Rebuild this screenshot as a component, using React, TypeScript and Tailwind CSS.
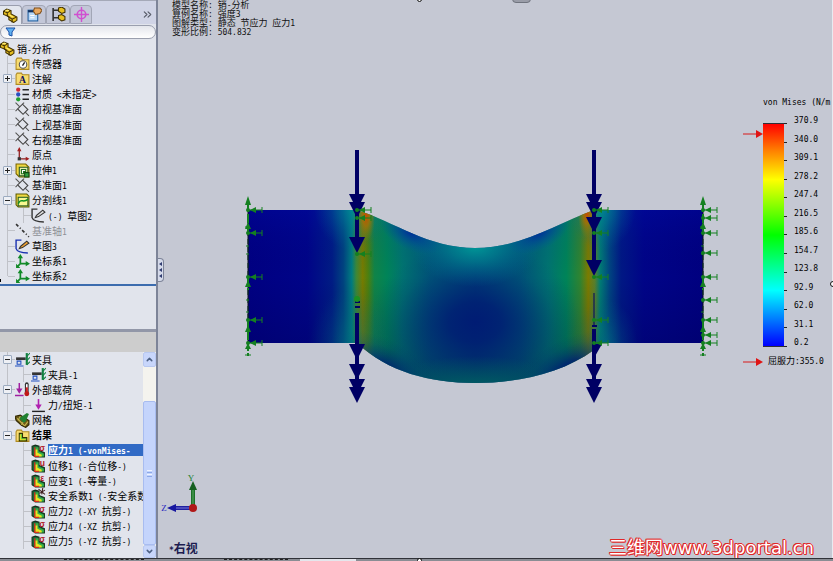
import { Fragment, useState, type ReactNode } from "react";
import { ChevronDown, ChevronUp, ChevronsRight } from "lucide-react";

type Level = 0 | 1 | 2;

interface TreeItem {
  icon: ReactNode;
  label: string;
  level: Level;
  toggle?: "+" | "-";
  muted?: boolean;
  bold?: boolean;
  last?: boolean;
}

// CJK glyphs are drawn full width, everything else in a half width mono face
function Mixed({ text }: { text: string }) {
  const runs = text.split(/([ -~]+)/).filter(Boolean);
  return (
    <>
      {runs.map((run, i) =>
        /^[ -~]+$/.test(run) ? (
          <span key={i} className="whitespace-pre font-['DejaVu_Sans_Mono',monospace] text-[8px]">
            {run}
          </span>
        ) : (
          <Fragment key={i}>{run}</Fragment>
        )
      )}
    </>
  );
}

function Icon({ children }: { children: ReactNode }) {
  return (
    <svg width="15" height="15" viewBox="0 0 14 14" className="shrink-0" fill="none" aria-hidden="true">
      {children}
    </svg>
  );
}

const PartIcon = () => (
  <Icon>
    <path d="M0.500 3l3-2 4 1.500v3l5.500 3v3l-3 2-4.500-2.500V8L.5 6z" fill="#e8c020" stroke="#403000" />
    <path d="M1 3l3 1.500 3-2M4 4.500v3l4.500 3 4-2M8.500 10.500v3" stroke="#403000" />
    <path d="M2 3l2-1 1.500 .5M6 6.500l3.500 2" stroke="#fff07a" />
  </Icon>
);

const FolderBase = () => (
  <path d="M1 3.500l1-1.500h4l1 1.500h6v9H1z" fill="#f8dc70" stroke="#b08a20" />
);

const SensorIcon = () => (
  <Icon>
    <FolderBase />
    <circle cx="7.500" cy="8" r="3.500" fill="#fff" stroke="#555" />
    <path d="M7 9l2-3" stroke="#222" strokeWidth="1.300" />
  </Icon>
);

const NoteIcon = () => (
  <Icon>
    <FolderBase />
    <text x="7" y="11.500" textAnchor="middle" fontSize="9" fontWeight="700" fontFamily="Liberation Serif, serif" fill="#101060">
      A
    </text>
  </Icon>
);

const MaterialIcon = () => (
  <Icon>
    <circle cx="3" cy="2.500" r="2" fill="#d02a30" />
    <circle cx="3" cy="7" r="2" fill="#2a50c0" />
    <circle cx="3" cy="11.500" r="2" fill="#20a030" />
    <path d="M7 2.500h6M7 7h6M7 11.500h6" stroke="#222" strokeWidth="1.400" />
  </Icon>
);

const PlaneIcon = () => (
  <Icon>
    <path d="M2.500 6.500L7 2l5 5-4.500 4.500z" stroke="#444" />
    <path d="M.5 .5l4 4M9.500 9.500l3.500 3.500M.5 8.500l2-2M7 2l1.500-1.500" stroke="#555" />
  </Icon>
);

const OriginIcon = () => (
  <Icon>
    <path d="M4 11V3M4 11h8" stroke="#902020" strokeWidth="1.200" />
    <path d="M2 4l2-4 2 4zM10 9l3.500 2-3.500 2z" fill="#a02020" />
    <rect x="2.500" y="9.500" width="3" height="3" fill="#333" />
  </Icon>
);

const ExtrudeIcon = () => (
  <Icon>
    <path d="M1 1h9l3 3v9H4L1 10z" fill="#f0d840" stroke="#7a6400" />
    <path d="M4 4h8v8H4z" fill="#e8f0b0" stroke="#285a28" />
    <path d="M6 6h4v2H8v2H6z" fill="#fff" stroke="#207020" />
    <path d="M9 9h4v4H9z" fill="#30a040" stroke="#104810" />
  </Icon>
);

const SplitIcon = () => (
  <Icon>
    <path d="M1 1h10l2 2v10H3L1 11z" fill="#f0d840" stroke="#5c5a00" />
    <rect x="3" y="4" width="9" height="8" fill="#f8f890" stroke="#286028" />
    <path d="M3 10c3-6 4 0 9-4" stroke="#109020" strokeWidth="1.500" />
  </Icon>
);

const SketchIcon = ({ color, pen }: { color: string; pen: string }) => (
  <Icon>
    <path d="M6 1H1v8c1 3 4 4 11 4" stroke={color} strokeWidth="1.300" />
    <path d="M5 7l6-5 2 2-6 4-3 1z" fill={pen} stroke="#333" />
  </Icon>
);

const AxisIcon = () => (
  <Icon>
    <path d="M1 1l12 12" stroke="#333" strokeWidth="1.500" strokeDasharray="3 2 1 2" />
  </Icon>
);

const CoordIcon = () => (
  <Icon>
    <path d="M5 9V3M5 9h7M5 9l-3 3" stroke="#128a28" strokeWidth="1.600" />
    <path d="M2.500 4L5 0l2.500 4zM10 6.500l4 2.500-4 2.500zM1 9v4h4z" fill="#128a28" />
  </Icon>
);

const FixtureIcon = () => (
  <Icon>
    <path d="M1 5h9v2.500H1z" fill="#333" />
    <path d="M11 1v11" stroke="#118040" strokeWidth="2" />
    <path d="M11 4l3-3M11 8l3-3M11 12l3-3" stroke="#118040" />
    <path d="M2 8.500h3.500v3H2zM0 13h8" stroke="#2050c0" />
  </Icon>
);

const LoadsIcon = () => (
  <Icon>
    <path d="M4 1v8M0 12.500h8" stroke="#a020a0" strokeWidth="1.400" />
    <path d="M1 6h6l-3 5z" fill="#a020a0" />
    <path d="M11 2v9" stroke="#333" strokeWidth="3.500" strokeLinecap="round" />
    <path d="M11 2v8" stroke="#fff" strokeWidth="1.500" />
    <path d="M11 5v6" stroke="#d02020" strokeWidth="2" />
    <circle cx="11" cy="11" r="2.300" fill="#c01818" />
  </Icon>
);

const ForceIcon = () => (
  <Icon>
    <path d="M7 1v7" stroke="#b020b0" strokeWidth="1.500" />
    <path d="M4 6h6l-3 5z" fill="#b020b0" />
    <path d="M1 12.500h12" stroke="#222" strokeWidth="1.300" />
  </Icon>
);

const MeshIcon = () => (
  <Icon>
    <path d="M0 3l5-1 3 2 5 3v4l-3 2.500-4-2L1 7z" fill="#6a5818" stroke="#302800" />
    <path d="M2 5l3 3 4 4M5 3L3 7M8 8l-2 3M12 8l-3 4" stroke="#c8b850" />
    <path d="M4 5l7-5 2 1-3 7-2 1z" fill="#208030" />
  </Icon>
);

const ResultsIcon = () => (
  <Icon>
    <FolderBase />
    <path d="M4 5h3v4h4v3H4z" fill="#70d040" stroke="#303000" />
    <path d="M5 6v5h5" stroke="#e8e020" />
  </Icon>
);

const PlotIcon = ({ mark }: { mark?: string }) => (
  <Icon>
    <path d="M1 3l3-1 3.500 1v4l5 2v4H4L1 11z" fill="#186838" stroke="#16301c" />
    <path d="M4 4h3v4l5 2v2.500H4z" fill="#38b048" />
    <path d="M4 6h2v3l4 2v1.500H4z" fill="#ece420" />
    <path d="M3.500 4v8.500h4" stroke="#d83020" strokeWidth="1.200" />
    {mark ? (
      <text x="10.500" y="7" textAnchor="middle" fontSize="8" fontWeight="700" fontFamily="Liberation Sans, sans-serif" fill="#b01828">
        {mark}
      </text>
    ) : (
      <path d="M7 1l6 5M11 0l-1 6M8 5l5-3" stroke="#402020" />
    )}
  </Icon>
);

const MODEL_TREE: TreeItem[] = [
  { icon: <PartIcon />, label: "销-分析", level: 0 },
  { icon: <SensorIcon />, label: "传感器", level: 1 },
  { icon: <NoteIcon />, label: "注解", level: 1, toggle: "+" },
  { icon: <MaterialIcon />, label: "材质 <未指定>", level: 1 },
  { icon: <PlaneIcon />, label: "前视基准面", level: 1 },
  { icon: <PlaneIcon />, label: "上视基准面", level: 1 },
  { icon: <PlaneIcon />, label: "右视基准面", level: 1 },
  { icon: <OriginIcon />, label: "原点", level: 1 },
  { icon: <ExtrudeIcon />, label: "拉伸1", level: 1, toggle: "+" },
  { icon: <PlaneIcon />, label: "基准面1", level: 1 },
  { icon: <SplitIcon />, label: "分割线1", level: 1, toggle: "-" },
  { icon: <SketchIcon color="#333" pen="#ddd" />, label: "(-) 草图2", level: 2 },
  { icon: <AxisIcon />, label: "基准轴1", level: 1, muted: true },
  { icon: <SketchIcon color="#1830b0" pen="#f0a030" />, label: "草图3", level: 1 },
  { icon: <CoordIcon />, label: "坐标系1", level: 1 },
  { icon: <CoordIcon />, label: "坐标系2", level: 1, last: true },
];

const STUDY_TREE: TreeItem[] = [
  { icon: <FixtureIcon />, label: "夹具", level: 1, toggle: "-" },
  { icon: <FixtureIcon />, label: "夹具-1", level: 2 },
  { icon: <LoadsIcon />, label: "外部载荷", level: 1, toggle: "-" },
  { icon: <ForceIcon />, label: "力/扭矩-1", level: 2 },
  { icon: <MeshIcon />, label: "网格", level: 1 },
  { icon: <ResultsIcon />, label: "结果", level: 1, toggle: "-", bold: true, last: true },
  { icon: <PlotIcon mark="σ" />, label: "应力1 (-vonMises-", level: 2 },
  { icon: <PlotIcon mark="u" />, label: "位移1 (-合位移-)", level: 2 },
  { icon: <PlotIcon mark="ε" />, label: "应变1 (-等量-)", level: 2 },
  { icon: <PlotIcon />, label: "安全系数1 (-安全系数", level: 2 },
  { icon: <PlotIcon mark="σ" />, label: "应力2 (-XY 抗剪-)", level: 2 },
  { icon: <PlotIcon mark="σ" />, label: "应力4 (-XZ 抗剪-)", level: 2 },
  { icon: <PlotIcon mark="σ" />, label: "应力5 (-YZ 抗剪-)", level: 2 },
];

function Gutter({ item, trunk }: { item: TreeItem; trunk: boolean }) {
  return (
    <span className="grid w-[15px] shrink-0 self-stretch place-items-center *:[grid-area:1/1]">
      {trunk && <span className={item.last ? "h-1/2 w-px self-start bg-[#c0c2c8]" : "h-full w-px bg-[#c0c2c8]"} />}
      {item.level === 1 && <span className="h-px w-[7px] justify-self-end bg-[#c0c2c8]" />}
      {item.toggle && (
        <button
          type="button"
          aria-label={item.toggle === "+" ? `展开${item.label}` : `折叠${item.label}`}
          className="z-10 mr-px size-[9px] rounded-[1px] border border-[#9cabc0] bg-[#eef0f5]"
        >
          <svg viewBox="0 0 7 7" className="block size-[7px]" stroke="#222">
            <path d={item.toggle === "+" ? "M1 3.500h5M3.500 1v5" : "M1 3.500h5"} />
          </svg>
        </button>
      )}
    </span>
  );
}

function Row({ item, trunk, selected, onSelect }: { item: TreeItem; trunk: boolean; selected: boolean; onSelect: () => void }) {
  return (
    <li className="flex min-w-0 items-center">
      {item.level > 0 && <Gutter item={item} trunk={trunk} />}
      {item.level === 2 && (
        <span className="grid w-4 shrink-0 self-stretch *:[grid-area:1/1]">
          <span className="h-full w-px justify-self-center bg-[#c0c2c8]" />
          <span className="h-px w-2 self-center justify-self-end bg-[#c0c2c8]" />
        </span>
      )}
      {item.icon}
      <button
        type="button"
        onClick={onSelect}
        className={
          "ml-[2px] h-3 whitespace-nowrap text-left text-[10px] leading-[14px] " +
          (selected
            ? "flex-1 bg-[#316ac5] font-bold text-white"
            : item.muted
              ? "text-[#8e9096]"
              : item.bold
                ? "font-bold text-black"
                : "text-black")
        }
      >
        <Mixed text={item.label} />
      </button>
    </li>
  );
}

function PanelTabs() {
  return (
    <div className="flex h-6 items-end border-t border-[#a5a9b8] bg-[#d0d4e6]">
      <button type="button" aria-label="特征树" className="flex h-[19px] w-[22px] items-center justify-center rounded-tr-sm border-t border-r border-[#9a9eae] bg-[#e3e6ee]">
        <PartIcon />
      </button>
      <button type="button" aria-label="属性" className="flex h-[19px] w-6 items-center justify-center rounded-t-sm border border-[#a2a6b6] bg-[#c3c7d8]">
        <Icon>
          <rect x="1" y="3" width="9" height="10" fill="#b8d8f8" stroke="#2060a0" />
          <path d="M1 4h9" stroke="#103060" strokeWidth="2" />
          <path d="M3 8h4M3 10h4" stroke="#fff" />
          <path d="M7 1h5l2 2-2 3-4 1-2-3z" fill="#e8a860" stroke="#80501c" />
        </Icon>
      </button>
      <button type="button" aria-label="配置" className="flex h-[19px] w-6 items-center justify-center rounded-t-sm border border-[#a2a6b6] bg-[#c3c7d8]">
        <Icon>
          <path d="M2 1v12M2 3h5M2 10h5" stroke="#333" strokeWidth="1.500" />
          <path d="M7 1l3-1 3 2v3l-3 1-3-2zM7 8l3-1 3 2v3l-3 1-3-2z" fill="#e8c020" stroke="#403000" />
        </Icon>
      </button>
      <button type="button" aria-label="尺寸" className="flex h-[19px] w-[22px] items-center justify-center rounded-t-sm border border-[#a2a6b6] bg-[#c3c7d8]">
        <Icon>
          <circle cx="7" cy="7" r="4" stroke="#d050d0" strokeWidth="1.500" />
          <path d="M7 0v14M0 7h14" stroke="#d050d0" strokeWidth="1.300" />
        </Icon>
      </button>
      <button type="button" aria-label="更多" className="mr-[2px] ml-auto flex h-5 items-center text-[#555a66]">
        <ChevronsRight size={13} />
      </button>
    </div>
  );
}

function Sidebar() {
  const [selected, setSelected] = useState("应力1 (-vonMises-");

  return (
    <aside className="flex w-[158px] shrink-0 border-r-2 border-[#7d8498] bg-[#e1e4ec]">
      <div className="flex min-w-0 flex-1 flex-col">
        <PanelTabs />
        <label className="mt-px flex h-[14px] items-center rounded-full border border-[#9a9fae] bg-linear-to-b from-[#e4e6ec] to-white pl-1">
          <svg width="11" height="10" viewBox="0 0 11 10" aria-hidden="true">
            <path d="M1 1h9L7 5v4L4 8V5z" fill="#60b0f0" stroke="#1850a8" />
          </svg>
          <input aria-label="过滤器" className="ml-1 h-3 min-w-0 flex-1 bg-transparent text-[10px] outline-none" />
        </label>
        <ul className="mt-[2px] grid h-[243px] auto-rows-fr">
          {MODEL_TREE.map((item) => (
            <Row
              key={item.label}
              item={item}
              trunk
              selected={selected === item.label}
              onSelect={() => setSelected(item.label)}
            />
          ))}
        </ul>
        <div className="h-[2px] bg-[#3c6cae]" />
        <div className="flex-1" />
        <div className="h-[3px] bg-[#9297a8]" />
        <div className="h-5 bg-[#cdcdcd]" />
        <div className="flex h-[206px]">
          <ul className="grid h-[197px] min-w-0 flex-1 auto-rows-fr overflow-hidden">
            {STUDY_TREE.map((item, i) => (
              <Row
                key={item.label}
                item={item}
                trunk={i < 6}
                selected={selected === item.label}
                onSelect={() => setSelected(item.label)}
              />
            ))}
          </ul>
          <div className="flex w-[13px] flex-col bg-[#f4f3ee]">
            <button type="button" aria-label="向上滚动" className="flex h-[15px] items-center justify-center rounded-xs border border-[#b8c8f0] bg-[#c8d6fb] text-[#4d6185]">
              <ChevronUp size={9} strokeWidth={4} />
            </button>
            <div className="mt-[34px] flex flex-1 flex-col items-center justify-center gap-px rounded-xs border border-[#a8bcf0] bg-[#c4d4fc]">
              <i className="h-px w-[5px] bg-[#eef3ff]" />
              <i className="h-px w-[5px] bg-[#8ca8e8]" />
              <i className="h-px w-[5px] bg-[#eef3ff]" />
              <i className="h-px w-[5px] bg-[#8ca8e8]" />
            </div>
            <button type="button" aria-label="向下滚动" className="flex h-[13px] items-center justify-center rounded-xs border border-[#b8c8f0] bg-[#c8d6fb] text-[#4d6185]">
              <ChevronDown size={9} strokeWidth={4} />
            </button>
          </div>
        </div>
      </div>
    </aside>
  );
}

// short arrow pointing left with a bar at its tail
const Pin = ({ x, y }: { x: number; y: number }) => (
  <g stroke="#148020" fill="#148020">
    <path d={`M${x} ${y}h14m0-3v6`} fill="none" />
    <path d={`M${x + 2} ${y}l6-3v6z`} stroke="none" />
    <circle cx={x} cy={y} r="2" stroke="none" />
  </g>
);

const Edge = ({ x }: { x: number }) => (
  <g fill="#148020">
    <path d={`M${x - 3} 205l3-9 3 9z`} />
    <path d={`M${x} 203v28M${x} 277v13M${x} 320v36`} stroke="#148020" strokeWidth="2" strokeDasharray="9 2" />
    <path d={`M${x} 231v46M${x} 290v30`} stroke="#0a3020" strokeDasharray="5 3" />
    <path d={`M${x - 3} 229l3-7 3 7zM${x - 3} 287l3-7 3 7zM${x - 3} 332l3-7 3 7zM${x - 3} 349l3-6 3 6z`} />
    <path d={`M${x - 3} 355h6M${x - 3} 227h4M${x - 2} 246h3M${x - 2} 254h3M${x - 2} 300h3M${x - 2} 312h3`} stroke="#148020" />
  </g>
);

const Heads = ({ x, tops }: { x: number; tops: number[] }) => (
  <>
    {tops.map((y) => (
      <path key={y} d={`M${x - 8} ${y}h16l-8 16z`} fill="#000064" />
    ))}
  </>
);

function StressModel() {
  return (
    <svg
      viewBox="158 38 584 432"
      preserveAspectRatio="xMinYMin meet"
      className="h-[432px] min-w-0 flex-1"
      role="img"
      aria-label="von Mises 应力云图"
    >
      <defs>
        <clipPath id="body">
          <path d="M248 210H357C395 222 428 248 475 248S555 224 594 210H703V343H601L594 350C562 373 520 383 475 383S388 372 357 343H248z" />
        </clipPath>
        <linearGradient id="across" gradientUnits="userSpaceOnUse" x1="248" y1="0" x2="703" y2="0">
          <stop offset="0" stopColor="#000082" />
          <stop offset=".130" stopColor="#000488" />
          <stop offset=".185" stopColor="#001c84" />
          <stop offset=".210" stopColor="#004480" />
          <stop offset=".228" stopColor="#007c80" />
          <stop offset=".238" stopColor="#3c8838" />
          <stop offset=".252" stopColor="#767c00" />
          <stop offset=".264" stopColor="#4c8010" />
          <stop offset=".278" stopColor="#108448" />
          <stop offset=".305" stopColor="#008458" />
          <stop offset=".340" stopColor="#007470" />
          <stop offset=".400" stopColor="#005878" />
          <stop offset=".500" stopColor="#004078" />
          <stop offset=".600" stopColor="#005878" />
          <stop offset=".660" stopColor="#007470" />
          <stop offset=".700" stopColor="#008458" />
          <stop offset=".730" stopColor="#308430" />
          <stop offset=".748" stopColor="#7c7c00" />
          <stop offset=".762" stopColor="#58802c" />
          <stop offset=".774" stopColor="#007c74" />
          <stop offset=".795" stopColor="#004480" />
          <stop offset=".820" stopColor="#001884" />
          <stop offset=".870" stopColor="#000488" />
          <stop offset="1" stopColor="#000080" />
        </linearGradient>
        <linearGradient id="shade" x1="0" y1="0" x2="0" y2="1">
          <stop offset="0" stopColor="#0020ff" stopOpacity=".12" />
          <stop offset=".4" stopColor="#000040" stopOpacity="0" />
          <stop offset="1" stopColor="#000030" stopOpacity=".3" />
        </linearGradient>
        <radialGradient id="teal">
          <stop offset="0" stopColor="#009c98" />
          <stop offset=".4" stopColor="#009094" stopOpacity=".6" />
          <stop offset="1" stopColor="#006c90" stopOpacity="0" />
        </radialGradient>
        <radialGradient id="navy">
          <stop offset="0" stopColor="#001c74" />
          <stop offset=".25" stopColor="#001c74" stopOpacity=".8" />
          <stop offset=".5" stopColor="#002474" stopOpacity=".45" />
          <stop offset=".75" stopColor="#003074" stopOpacity=".15" />
          <stop offset="1" stopColor="#003474" stopOpacity="0" />
        </radialGradient>
        <radialGradient id="blue">
          <stop offset="0" stopColor="#003098" />
          <stop offset="1" stopColor="#005898" stopOpacity="0" />
        </radialGradient>
        <radialGradient id="deepgreen">
          <stop offset="0" stopColor="#006464" />
          <stop offset="1" stopColor="#006060" stopOpacity="0" />
        </radialGradient>
        <radialGradient id="hot">
          <stop offset="0" stopColor="#c84c00" />
          <stop offset=".4" stopColor="#a87000" stopOpacity=".8" />
          <stop offset="1" stopColor="#808000" stopOpacity="0" />
        </radialGradient>
      </defs>

      <g clipPath="url(#body)">
        <rect x="248" y="205" width="455" height="180" fill="url(#across)" />
        <rect x="248" y="205" width="455" height="180" fill="url(#shade)" />
        <ellipse cx="475" cy="322" rx="105" ry="80" fill="url(#navy)" />
        <ellipse cx="475" cy="390" rx="100" ry="34" fill="url(#deepgreen)" />
        <ellipse cx="475" cy="245" rx="65" ry="42" fill="url(#teal)" />
        <ellipse cx="411" cy="233" rx="34" ry="17" fill="url(#blue)" transform="rotate(26 411 233)" />
        <ellipse cx="539" cy="233" rx="34" ry="17" fill="url(#blue)" transform="rotate(-26 539 233)" />
        <ellipse cx="380" cy="370" rx="60" ry="32" fill="url(#navy)" transform="rotate(26 380 370)" />
        <ellipse cx="571" cy="370" rx="60" ry="32" fill="url(#navy)" transform="rotate(-26 571 370)" />
        <ellipse cx="352" cy="206" rx="38" ry="44" fill="url(#teal)" opacity=".6" />
        <ellipse cx="602" cy="206" rx="34" ry="44" fill="url(#teal)" opacity=".6" />
        <ellipse cx="350" cy="345" rx="40" ry="56" fill="url(#teal)" opacity=".35" />
        <ellipse cx="606" cy="345" rx="32" ry="46" fill="url(#teal)" opacity=".35" />
        <ellipse cx="366" cy="216" rx="9" ry="26" fill="url(#hot)" />
        <ellipse cx="587" cy="214" rx="9" ry="24" fill="url(#hot)" />
      </g>
      <path d="M248 210v133M703 210v133" stroke="#101020" />

      <g stroke="#000064" strokeWidth="4">
        <path d="M357 150v94M357 313v76" />
        <path d="M594 150v112M594 329v60" />
        <path d="M594 293v32" strokeWidth="1" />
        <path d="M355 302h5M355 307h5M592 326h5" strokeWidth="2" />
      </g>
      <Heads x={357} tops={[194, 202, 237, 344, 364, 379, 387]} />
      <Heads x={594} tops={[194, 202, 217, 260, 364, 379, 387]} />
      <path d="M594 344h8l-8 14z" fill="#000064" />

      <Edge x={248} />
      <Edge x={703} />
      {[210, 233, 277, 320, 343].map((y) => (
        <Pin key={y} x={248} y={y} />
      ))}
      {[210, 218, 233, 253, 277, 300, 320, 335, 343].map((y) => (
        <Pin key={y} x={703} y={y} />
      ))}
      {[210, 218, 254].map((y) => (
        <Pin key={y} x={357} y={y} />
      ))}
      {[210, 233, 277, 320, 343].map((y) => (
        <Pin key={y} x={594} y={y} />
      ))}
      <circle cx="357" cy="299" r="3" fill="#1c9020" />
    </svg>
  );
}

const LEGEND = ["370.9", "340.0", "309.1", "278.2", "247.4", "216.5", "185.6", "154.7", "123.8", "92.9", "62.0", "31.1", "0.2"];

const RedArrow = () => (
  <svg width="21" height="10" viewBox="0 0 21 10" className="shrink-0" aria-hidden="true">
    <path d="M1 5h14" stroke="#d81818" />
    <path d="M14 1l7 4-7 4z" fill="#e01414" />
  </svg>
);

function Legend() {
  return (
    <section aria-label="图例" className="w-[90px] shrink-0 pt-[60px] font-['DejaVu_Sans_Mono',monospace] text-[8px] leading-[10px] text-black">
      <h2 className="ml-[21px] whitespace-nowrap">von Mises (N/m</h2>
      <div className="mt-2 flex">
        <div className="mt-[13px]">
          <RedArrow />
        </div>
        <div className="mt-[7px] h-[224px] w-[21px] border-y border-[#303038] bg-[linear-gradient(to_bottom,#ff0000,#ff8000_12%,#ffff00_25%,#00ff00_50%,#00ffff_75%,#0000ff)]" />
        <div className="mt-[7px] flex h-[224px] w-[3px] flex-col justify-between">
          {LEGEND.map((value) => (
            <i key={value} className="h-px bg-[#222]" />
          ))}
        </div>
        <ol className="ml-[7px] flex h-[232px] flex-col justify-between">
          {LEGEND.map((value) => (
            <li key={value}>{value}</li>
          ))}
        </ol>
      </div>
      <p className="mt-2 flex items-center gap-[5px] whitespace-nowrap">
        <RedArrow />
        <span className="font-['Liberation_Sans','Noto_Sans_CJK_SC',sans-serif] text-[9px]">
          <Mixed text="屈服力:355.0" />
        </span>
      </p>
    </section>
  );
}

function Viewport() {
  return (
    <main className="relative flex min-w-0 flex-1 flex-col overflow-hidden bg-[#c5c8d3]">
      <ul className="grid h-[38px] content-start pt-px pl-[14px] text-[9px] leading-[9px] text-[#111]">
        {["模型名称: 销-分析", "算例名称: 强度3", "图解类型: 静态 节应力 应力1", "变形比例: 504.832"].map((line) => (
          <li key={line}>
            <Mixed text={line} />
          </li>
        ))}
      </ul>
      <div className="flex">
        <StressModel />
        <Legend />
      </div>
      <footer className="mt-auto flex items-end justify-between pr-[18px]">
        <div>
          <svg width="48" height="46" viewBox="160 472 48 46" className="ml-[2px]" role="img" aria-label="坐标轴">
            <path d="M193 509v-20" stroke="#1c7028" strokeWidth="4" />
            <path d="M193 509v-20" stroke="#58a860" />
            <path d="M189 492l4-9 4 9z" fill="#156020" />
            <path d="M193 510h-18" stroke="#2020a0" strokeWidth="4" />
            <path d="M193 510h-18" stroke="#7878d8" />
            <path d="M176 506l-9 4 9 4z" fill="#1818a0" />
            <circle cx="193" cy="510" r="4" fill="#b01818" />
            <text x="191" y="483" textAnchor="middle" fontSize="9" fontFamily="Liberation Serif, serif" fill="#208030">
              Y
            </text>
            <text x="164" y="513" textAnchor="middle" fontSize="9" fontFamily="Liberation Serif, serif" fill="#2828c0">
              Z
            </text>
          </svg>
          <p className="mt-[26px] ml-[11px] text-[12px] leading-[14px] font-bold text-[#1c1c50]">
            <Mixed text="*右视" />
          </p>
        </div>
        <a
          href="#portal"
          className="flex items-center font-['DejaVu_Sans','Noto_Sans_CJK_SC',sans-serif] text-[18px] leading-5 whitespace-nowrap text-white [text-shadow:1px_0_#e02828,-1px_0_#e02828,0_1px_#e02828,0_-1px_#e02828,1px_1px_#e02828,-1px_-1px_#e02828]"
        >
          三维网www.3dportal.cn
        </a>
      </footer>
      <span className="absolute -top-[5px] left-[354px] h-2 w-[19px] rounded-md border border-[#70747e] bg-[#9a9da8]" />
      <button
        type="button"
        aria-label="收起面板"
        className="absolute top-[258px] left-0 flex h-6 w-[6px] items-center justify-center rounded-r-sm border border-l-0 border-[#7d8498] bg-[#d5daea]"
      >
        <svg width="4" height="18" viewBox="0 0 4 18" fill="#303c70">
          <path d="M3 1v4L0 3zM3 7v4L0 9zM3 13v4l-3-2z" />
        </svg>
      </button>
    </main>
  );
}

export default function App() {
  return (
    <div className="relative flex min-h-screen flex-col overflow-hidden font-['Liberation_Sans','Noto_Sans_CJK_SC',sans-serif]">
      <div className="flex flex-1 border-r border-[#e8eaf0]">
        <Sidebar />
        <Viewport />
      </div>
      <div className="flex h-[3px] border-t border-[#303238] bg-[#8a8d94]">
        <i className="ml-16 w-20 border-t border-dashed border-[#222]" />
        <i className="ml-20 w-16 border-t border-dashed border-[#222]" />
        <i className="ml-3 w-14 bg-[#e4e6ec]" />
      </div>
      <span className="absolute -top-[3px] left-1/2 size-[5px] rounded-full border border-[#111] bg-white" />
      <span className="absolute top-1/2 -right-[3px] size-[6px] rounded-full border border-[#111] bg-white" />
      <span className="absolute -bottom-[2px] left-1/2 size-[5px] rounded-full border border-[#111] bg-white" />
      <span className="absolute top-[279px] left-0 h-[3px] w-px bg-black" />
    </div>
  );
}
